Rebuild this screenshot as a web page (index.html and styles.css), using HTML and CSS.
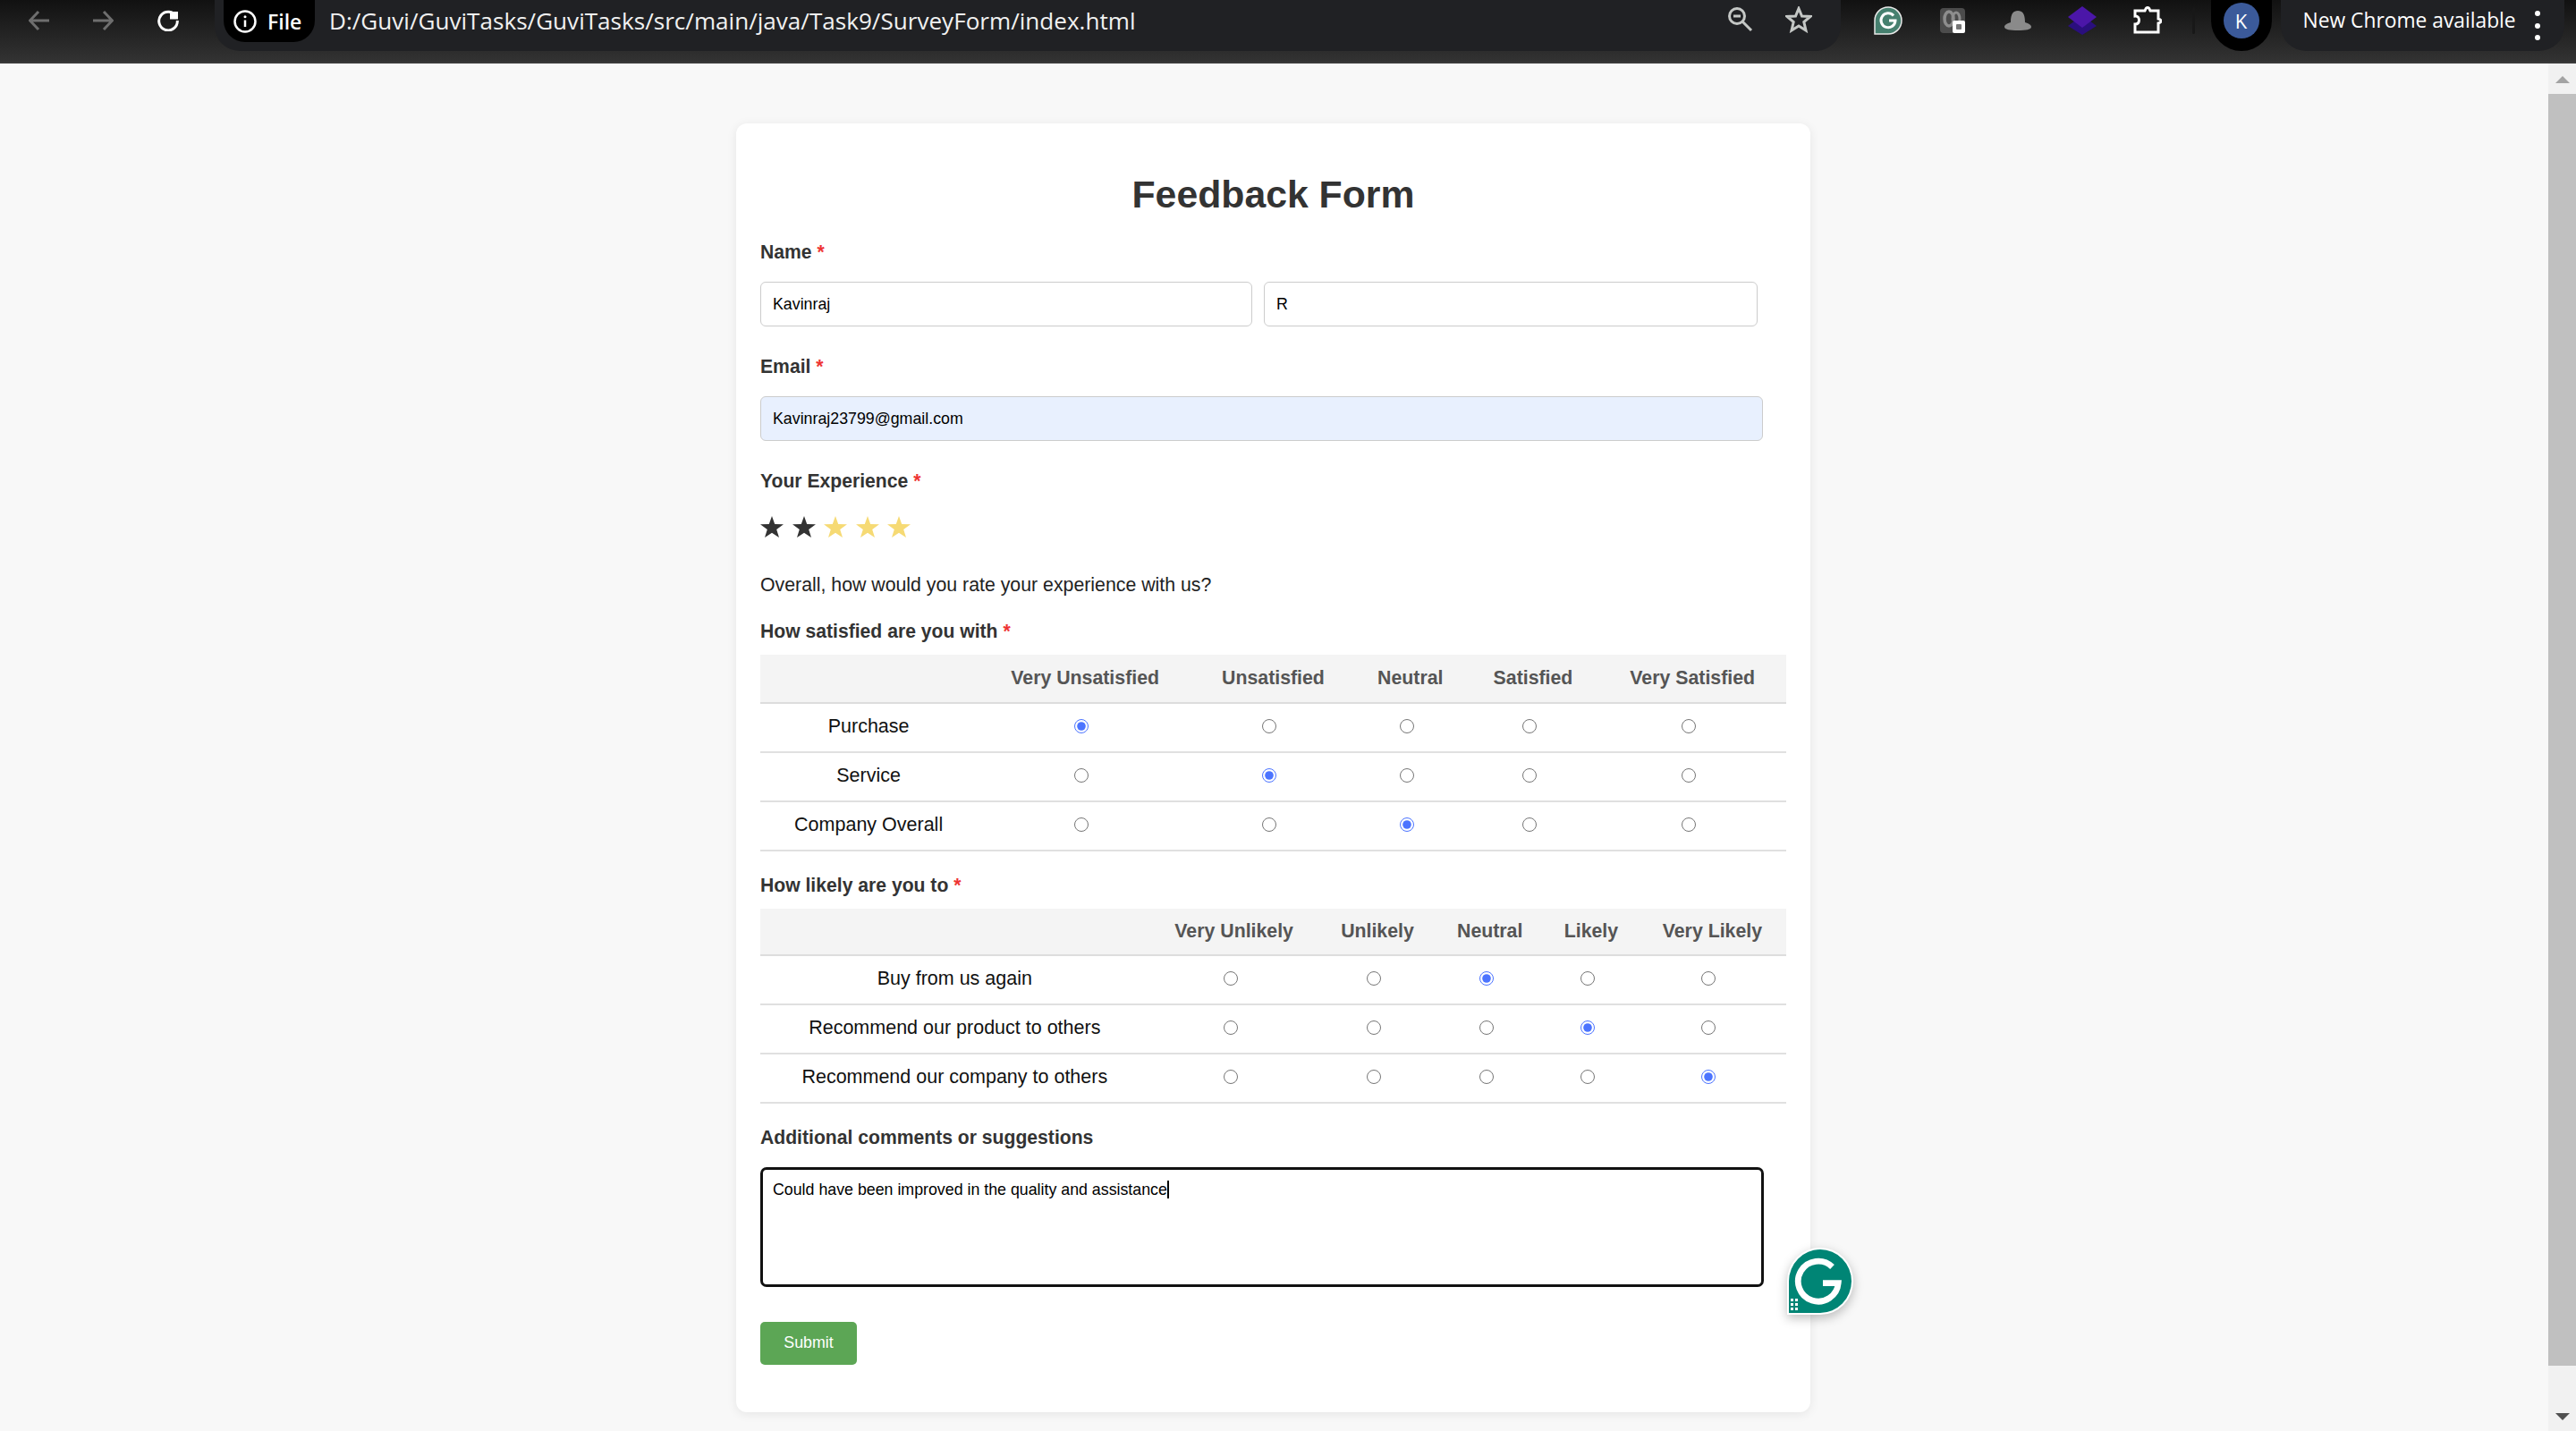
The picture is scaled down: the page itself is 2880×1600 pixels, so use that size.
FILE: index.html
```html
<!DOCTYPE html>
<html lang="en">
<head>
  <meta charset="UTF-8" />
  <title>Feedback Form</title>
  <meta name="viewport" content="width=device-width, initial-scale=1.0" />
  <link rel="stylesheet" href="styles.css">
</head>
<body>
  <svg class="defs" width="0" height="0">
    <symbol id="star" viewBox="0 0 26 24"><polygon points="13,0 16.2,8.9 26,9.2 18.2,15 21,24 13,18.7 5,24 7.8,15 0,9.2 9.8,8.9" /></symbol>
  </svg>

  <header class="toolbar">
    <nav class="nav">
      <svg class="nav-btn dim" viewBox="0 0 24 24"><path d="M23 12H2M11 2 1.500 12 11 22" /></svg>
      <svg class="nav-btn dim" viewBox="0 0 24 24"><path d="M1 12h21M13 2l9.500 10L13 22" /></svg>
      <svg class="nav-btn" viewBox="0 0 24 24"><path d="M21 7.500A10.300 10.300 0 1 0 22.300 12" /><path class="fill" d="M14 3h9v8.500h-9z" transform="translate(0 -1)" /></svg>
    </nav>

    <div class="omnibox">
      <div class="chip">
        <svg class="info" viewBox="0 0 26 26"><circle cx="13" cy="13" r="11.500" /><path d="M13 11.500V19" /><circle class="fill" cx="13" cy="7.800" r="1.500" /></svg>
        <span>File</span>
      </div>
      <span class="url">D:/Guvi/GuviTasks/GuviTasks/src/main/java/Task9/SurveyForm/index.html</span>
      <div class="omni-actions">
        <svg class="omni-icon" viewBox="0 0 30 30"><circle cx="11" cy="11" r="8.500" /><path d="M7 11h8M17 17l10 10" /></svg>
        <svg class="omni-icon" viewBox="0 0 30 30"><polygon points="15,2.500 18.500,11 28,11.500 20.800,17.500 23,27 15,22 7,27 9.200,17.500 2,11.500 11.500,11" /></svg>
      </div>
    </div>

    <div class="extensions">
      <div class="ext">
        <svg viewBox="0 0 32 32" width="32" height="32"><path d="M16 1a15 15 0 1 1 0 30H1V16A15 15 0 0 1 16 1z" fill="#46806f" stroke="#e9e9e9" stroke-width="1.500" /><path d="M22 10.500A8 8 0 1 0 24 16h-7" fill="none" stroke="#fff" stroke-width="3" /></svg>
      </div>
      <div class="ext">
        <svg viewBox="0 0 28 28" width="28" height="28"><rect width="28" height="28" rx="4" fill="#4c4c4c" /><ellipse cx="10" cy="12" rx="5" ry="8" fill="none" stroke="#8d8d8d" stroke-width="3.500" /><ellipse cx="18" cy="12" rx="4" ry="7" fill="none" stroke="#8d8d8d" stroke-width="3" /><rect x="14" y="14" width="14" height="14" rx="2" fill="#fff" /><rect x="18" y="18" width="6" height="6" rx="1" fill="#777" /></svg>
      </div>
      <div class="ext">
        <svg viewBox="0 0 32 24" width="32" height="24"><path d="M8 14C8 4 11 1 16 1s8 3 8 13c4 1 7 3 7 5 0 3-6 4-15 4S1 22 1 19c0-2 3-4 7-5z" fill="#8a8a8a" /></svg>
      </div>
      <div class="ext">
        <svg viewBox="0 0 32 32" width="32" height="32"><path d="M16 10 32 22 16 32 0 22z" fill="#2a0f7d" /><path d="M16 0 32 12 16 24 0 12z" fill="#4b16a8" /></svg>
      </div>
      <div class="ext">
        <svg viewBox="0 0 32 32" width="32" height="32" fill="none" stroke="#fff" stroke-width="3"><path d="M2 5h11c1-2 1-3.500 3-3.500S18 3 19 5h9v9c2 .5 3 1 3 2.500S30 18.500 28 19v10H2v-9c3 0 4.500-2 4.500-4.500S5 10.500 2 11z" /></svg>
      </div>
    </div>

    <div class="separator"></div>
    <div class="profile"><span class="avatar">K</span></div>

    <div class="update-pill">
      <span>New Chrome available</span>
      <span class="dots"><i></i><i></i><i></i></span>
    </div>
  </header>

  <div class="viewport">
    <main class="page">
      <form class="card">
        <h1>Feedback Form</h1>

        <label class="label name-label">Name <span class="req">*</span></label>
        <div class="name-row">
          <input class="text-input first" type="text" value="Kavinraj" />
          <input class="text-input last" type="text" value="R" />
        </div>

        <label class="label">Email <span class="req">*</span></label>
        <input class="text-input email" type="email" value="Kavinraj23799@gmail.com" />

        <label class="label">Your Experience <span class="req">*</span></label>
        <div class="stars">
          <svg class="star on"><use href="#star" /></svg>
          <svg class="star on"><use href="#star" /></svg>
          <svg class="star"><use href="#star" /></svg>
          <svg class="star"><use href="#star" /></svg>
          <svg class="star"><use href="#star" /></svg>
        </div>
        <p class="question">Overall, how would you rate your experience with us?</p>

        <label class="label table-label">How satisfied are you with <span class="req">*</span></label>
        <table class="matrix satisfied">
          <thead>
            <tr><th></th><th>Very Unsatisfied</th><th>Unsatisfied</th><th>Neutral</th><th>Satisfied</th><th>Very Satisfied</th></tr>
          </thead>
          <tbody>
            <tr>
              <td>Purchase</td>
              <td><input type="radio" name="s1" checked /></td>
              <td><input type="radio" name="s1" /></td>
              <td><input type="radio" name="s1" /></td>
              <td><input type="radio" name="s1" /></td>
              <td><input type="radio" name="s1" /></td>
            </tr>
            <tr>
              <td>Service</td>
              <td><input type="radio" name="s2" /></td>
              <td><input type="radio" name="s2" checked /></td>
              <td><input type="radio" name="s2" /></td>
              <td><input type="radio" name="s2" /></td>
              <td><input type="radio" name="s2" /></td>
            </tr>
            <tr>
              <td>Company Overall</td>
              <td><input type="radio" name="s3" /></td>
              <td><input type="radio" name="s3" /></td>
              <td><input type="radio" name="s3" checked /></td>
              <td><input type="radio" name="s3" /></td>
              <td><input type="radio" name="s3" /></td>
            </tr>
          </tbody>
        </table>

        <label class="label table-label after-table">How likely are you to <span class="req">*</span></label>
        <table class="matrix">
          <thead>
            <tr><th></th><th>Very Unlikely</th><th>Unlikely</th><th>Neutral</th><th>Likely</th><th>Very Likely</th></tr>
          </thead>
          <tbody>
            <tr>
              <td>Buy from us again</td>
              <td><input type="radio" name="l1" /></td>
              <td><input type="radio" name="l1" /></td>
              <td><input type="radio" name="l1" checked /></td>
              <td><input type="radio" name="l1" /></td>
              <td><input type="radio" name="l1" /></td>
            </tr>
            <tr>
              <td>Recommend our product to others</td>
              <td><input type="radio" name="l2" /></td>
              <td><input type="radio" name="l2" /></td>
              <td><input type="radio" name="l2" /></td>
              <td><input type="radio" name="l2" checked /></td>
              <td><input type="radio" name="l2" /></td>
            </tr>
            <tr>
              <td>Recommend our company to others</td>
              <td><input type="radio" name="l3" /></td>
              <td><input type="radio" name="l3" /></td>
              <td><input type="radio" name="l3" /></td>
              <td><input type="radio" name="l3" /></td>
              <td><input type="radio" name="l3" checked /></td>
            </tr>
          </tbody>
        </table>

        <label class="label comments-label">Additional comments or suggestions</label>
        <div class="comment-wrap">
          <textarea class="comment">Could have been improved in the quality and assistance</textarea>
          <span class="caret"></span>
          <div class="grammarly">
            <svg viewBox="0 0 40 40" width="60" height="60"><path d="M29 9A15 15 0 1 0 33.500 21H22" fill="none" stroke="#fff" stroke-width="4.500" /></svg>
            <span class="grip"><i></i><i></i><i></i><i></i><i></i><i></i></span>
          </div>
        </div>

        <button class="submit" type="button">Submit</button>
      </form>
    </main>

    <div class="scrollbar">
      <div class="arrow up"></div>
      <div class="thumb"></div>
      <div class="arrow down"></div>
    </div>
  </div>
</body>
</html>
```

FILE: styles.css
```css
* {
  box-sizing: border-box;
}

html, body {
  margin: 0;
  height: 100%;
  overflow: hidden;
}

body {
  font-family: "Liberation Sans", Arial, sans-serif;
  background: #f8f8f8;
  color: #333;
}

.defs {
  position: absolute;
}

/* browser chrome */
.toolbar {
  display: flex;
  align-items: flex-start;
  height: 71px;
  background: linear-gradient(#111, #333);
  border-bottom: 2px solid #3a3a3a;
  font-family: "Open Sans", sans-serif;
  color: #fff;
}

.nav {
  display: flex;
  gap: 47px;
  width: 240px;
  padding: 11px 0 0 32px;
}

.nav-btn {
  width: 24px;
  height: 24px;
  fill: none;
  stroke: #fff;
  stroke-width: 3;
}

.nav-btn:last-child {
  margin-left: 2px;
}

.nav-btn.dim {
  stroke: #6e6e6e;
}

.nav-btn .fill {
  fill: #fff;
  stroke: none;
}

.omnibox {
  display: flex;
  align-items: flex-start;
  width: 1818px;
  height: 57px;
  padding-left: 10px;
  background: #202124;
  border-radius: 0 0 28px 28px;
}

.chip {
  display: flex;
  align-items: center;
  gap: 12px;
  width: 102px;
  height: 47px;
  padding-left: 11px;
  background: #000;
  border-radius: 0 0 24px 24px;
  font-size: 23px;
  font-weight: 600;
}

.info {
  width: 26px;
  height: 26px;
  fill: none;
  stroke: #fff;
  stroke-width: 2.500;
}

.info .fill {
  fill: #fff;
  stroke: none;
}

.url {
  margin-left: 16px;
  line-height: 46px;
  font-size: 26.100px;
  color: #f1f1f1;
  white-space: nowrap;
}

.omni-actions {
  display: flex;
  gap: 35px;
  margin-left: auto;
  padding: 7px 32px 0 0;
}

.omni-icon {
  width: 30px;
  height: 30px;
  fill: none;
  stroke: #c4c7c5;
  stroke-width: 3;
}

.extensions {
  display: flex;
  margin-left: 16.500px;
}

.ext {
  display: flex;
  align-items: center;
  justify-content: center;
  width: 72.500px;
  height: 46px;
}

.separator {
  width: 3px;
  height: 30px;
  margin: 8px 0 0 13.500px;
  background: #181818;
  border-radius: 2px;
}

.profile {
  display: flex;
  justify-content: center;
  width: 68px;
  height: 57px;
  margin-left: 18px;
  padding-top: 3px;
  background: #000;
  border-radius: 0 0 34px 34px;
}

.avatar {
  width: 40px;
  height: 40px;
  line-height: 40px;
  text-align: center;
  font-size: 22px;
  background: #3b5a9a;
  border-radius: 50%;
}

.update-pill {
  display: flex;
  align-items: flex-start;
  width: 317px;
  height: 57px;
  margin-left: 10px;
  padding: 0 0 0 25px;
  background: #202124;
  border-radius: 0 0 28px 28px;
  font-size: 22.800px;
  line-height: 46px;
  white-space: nowrap;
}

.dots {
  display: flex;
  flex-direction: column;
  gap: 7.500px;
  margin: 12px 0 0 21px;
}

.dots i {
  width: 6px;
  height: 6px;
  background: #fff;
  border-radius: 50%;
}

/* page */
.viewport {
  display: flex;
  height: 1529px;
}

.page {
  flex: 1;
  overflow: hidden;
}

.card {
  width: 1201px;
  height: 1441px;
  margin: 67px 0 0 823px;
  padding: 55px 27px 0;
  background: #fff;
  border-radius: 12px;
  box-shadow: 0 2px 12px rgba(0, 0, 0, 0.08);
}

h1 {
  margin: 0 0 28px;
  font-size: 42.750px;
  line-height: 49px;
  text-align: center;
  color: #333;
}

.label {
  display: block;
  margin-bottom: 21px;
  font-size: 21.150px;
  line-height: 24px;
  font-weight: bold;
}

.table-label {
  margin-bottom: 14px;
}

.after-table {
  margin-top: 26px;
}

.comments-label {
  margin-top: 26px;
}

.req {
  color: #e33;
}

.name-row {
  display: flex;
  gap: 13px;
  margin-bottom: 33px;
}

.text-input {
  display: block;
  height: 50px;
  padding: 0 13px;
  background: #fff;
  border: 1.500px solid #ccc;
  border-radius: 6px;
  font-family: inherit;
  font-size: 17.800px;
  color: #000;
}

.text-input.first {
  width: 550px;
}

.text-input.last {
  width: 552px;
}

.text-input.email {
  width: 1121px;
  margin-bottom: 33px;
  background: #e8f0fe;
}

.stars {
  display: flex;
  gap: 9.500px;
  height: 24px;
  margin-top: 27px;
}

.star {
  width: 26px;
  height: 24px;
  fill: #f6da74;
}

.star.on {
  fill: #333;
}

.question {
  margin: 41px 0 27px;
  font-size: 21.300px;
  line-height: 25px;
  color: #222;
}

.matrix {
  width: 100%;
  border-collapse: collapse;
}

.matrix th {
  padding: 13px 15px 14px;
  background: #f4f4f4;
  border-bottom: 2px solid #ddd;
  font-size: 21.300px;
  line-height: 24px;
  color: #555;
  white-space: nowrap;
}

.matrix.satisfied th {
  padding: 14px 15px 15px;
}

.matrix td {
  padding: 13px 15px 15px;
  border-bottom: 2px solid #e0e0e0;
  font-size: 21.500px;
  line-height: 25px;
  text-align: center;
  color: #111;
  white-space: nowrap;
}

.matrix input {
  width: 16px;
  height: 16px;
  margin: -2px 8px 0 0;
  vertical-align: middle;
  accent-color: #4c74ff;
}

.comment-wrap {
  position: relative;
  height: 134px;
  margin-bottom: 39px;
}

.comment {
  display: block;
  width: 1122px;
  height: 134px;
  padding: 12px 11px;
  background: #fff;
  border: 3px solid #111;
  border-radius: 7px;
  outline: none;
  resize: none;
  font-family: inherit;
  font-size: 17.800px;
  line-height: 20px;
  color: #000;
}

.caret {
  position: absolute;
  left: 455px;
  top: 15px;
  width: 2px;
  height: 20px;
  background: #000;
}

.grammarly {
  position: absolute;
  left: 1148px;
  top: 90px;
  display: flex;
  align-items: center;
  justify-content: center;
  width: 74px;
  height: 75px;
  background: #008575;
  border: 2px solid #fff;
  border-radius: 50% 50% 50% 0;
  box-shadow: 0 4px 12px rgba(0, 0, 0, 0.25);
}

.grip {
  position: absolute;
  left: 2px;
  bottom: 3px;
  display: grid;
  grid-template-columns: 3px 3px;
  gap: 2px;
}

.grip i {
  width: 3px;
  height: 3px;
  background: #fff;
}

.submit {
  display: block;
  width: 108px;
  height: 48px;
  padding-bottom: 3px;
  background: #5ca655;
  border: none;
  border-radius: 5px;
  font-family: inherit;
  font-size: 17.800px;
  color: #fff;
}

/* page scrollbar */
.scrollbar {
  display: flex;
  flex-direction: column;
  align-items: center;
  width: 31px;
  background: #f1f1f1;
}

.arrow {
  flex: none;
  width: 0;
  height: 0;
  border-left: 8px solid transparent;
  border-right: 8px solid transparent;
}

.arrow.up {
  margin: 14px 0 12px;
  border-bottom: 8px solid #a3a3a3;
}

.arrow.down {
  margin: 53px 0 12px;
  border-top: 8px solid #505050;
}

.thumb {
  flex: none;
  width: 100%;
  height: 1422px;
  background: #c0c0c0;
}
```
